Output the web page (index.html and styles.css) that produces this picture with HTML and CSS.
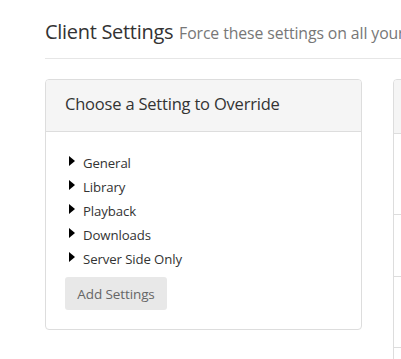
FILE: index.html
```html
<!DOCTYPE html>
<html>
<head>
<meta charset="utf-8">
<link rel="stylesheet" href="styles.css">
</head>
<body>
<div class="page">
  <div class="page-header">
    <h1 class="title">Client Settings <small class="subtitle">Force these settings on all your</small></h1>
  </div>
  <div class="row">
    <div class="panel panel-left">
      <div class="panel-heading">Choose a Setting to Override</div>
      <div class="panel-body">
        <ul class="tree">
          <li class="tree-item"><span class="caret"></span>General</li>
          <li class="tree-item"><span class="caret"></span>Library</li>
          <li class="tree-item"><span class="caret"></span>Playback</li>
          <li class="tree-item"><span class="caret"></span>Downloads</li>
          <li class="tree-item"><span class="caret"></span>Server Side Only</li>
        </ul>
        <button class="btn" disabled>Add Settings</button>
      </div>
    </div>
    <div class="panel panel-right">
      <div class="panel-heading">&nbsp;</div>
      <div class="list-row r1"></div>
      <div class="list-row r2"></div>
      <div class="list-row r3"></div>
      <div class="list-row r4"></div>
    </div>
  </div>
</div>
</body>
</html>
```
FILE: styles.css
```css
html, body {
  margin: 0;
  padding: 0;
  background: #fff;
  overflow: hidden;
}
body {
  font-family: "Open Sans", "Noto Sans", sans-serif;
  color: #333;
  width: 401px;
  height: 359px;
}
.page {
  padding-left: 45px;
  width: 700px;
}
.page-header {
  padding-top: 18px;
  height: 40px;
  border-bottom: 1px solid #e6e6e6;
  box-sizing: content-box;
}
.title {
  margin: 0;
  font-weight: 400;
  font-size: 20px;
  line-height: 28px;
  color: #333;
  white-space: nowrap;
  letter-spacing: -0.3px;
}
.subtitle {
  font-size: 15.8px;
  color: #777;
  letter-spacing: -0.1px;
  margin-left: 1px;
}
.row {
  display: flex;
  gap: 31px;
  margin-top: 20px;
}
.panel {
  border: 1px solid #ddd;
  border-radius: 4px;
  box-sizing: border-box;
  background: #fff;
}
.panel-left {
  width: 317px;
  height: 251px;
}
.panel-right {
  width: 317px;
  height: 290px;
}
.panel-heading {
  background: #f5f5f5;
  border-bottom: 1px solid #ddd;
  border-radius: 3px 3px 0 0;
  padding: 0 19px;
  height: 51px;
  line-height: 47px;
  font-size: 16.5px;
  color: #333;
  letter-spacing: -0.2px;
}
.panel-right .panel-heading {
  height: 53px;
}
.panel-body {
  padding: 19px 19px 0;
}
.tree {
  list-style: none;
  margin: 0;
  padding: 0 0 0 4px;
}
.tree-item {
  display: flex;
  align-items: center;
  height: 24px;
  font-size: 13.2px;
  color: #333;
  letter-spacing: -0.1px;
}
.caret {
  width: 0;
  height: 0;
  border-top: 5px solid transparent;
  border-bottom: 5px solid transparent;
  border-left: 6px solid #000;
  margin-right: 8px;
  margin-top: -4px;
}
.btn {
  margin-top: 6px;
  width: 102px;
  height: 33px;
  border: none;
  border-radius: 3px;
  background: #e8e8e8;
  color: #666;
  font-family: inherit;
  font-size: 13.5px;
  padding: 0;
  letter-spacing: -0.1px;
}
.list-row {
  border-bottom: 1px solid #ddd;
}
.r1 { height: 80px; }
.r2 { height: 61px; }
.r3 { height: 70px; }
.r4 { height: 20px; border-bottom: none; }
```
